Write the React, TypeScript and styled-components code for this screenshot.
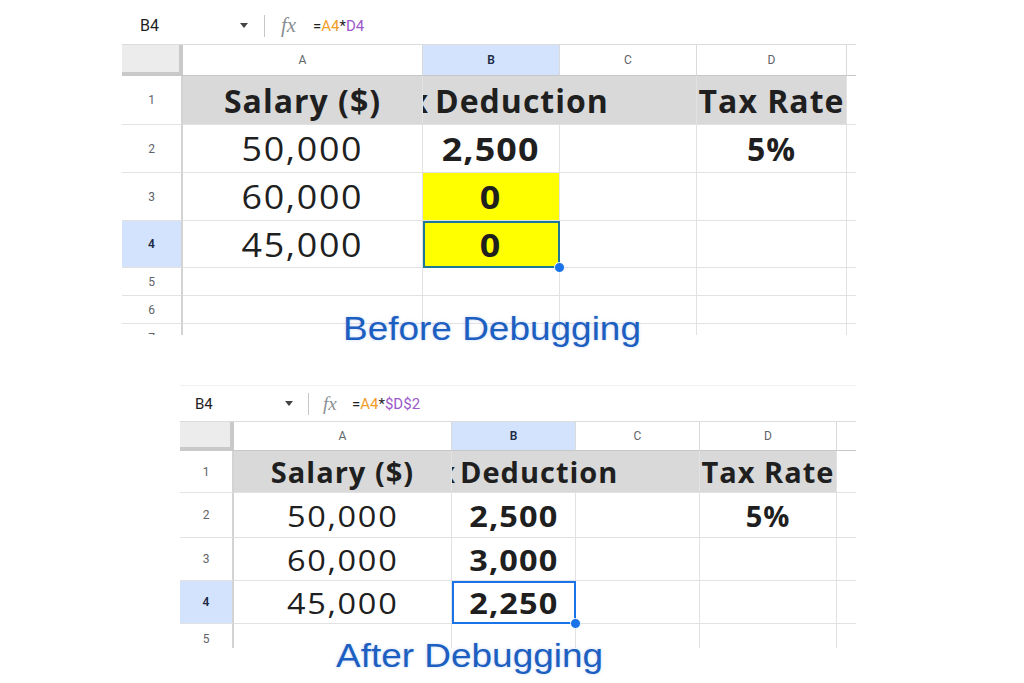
import React from 'react';
import styled, { createGlobalStyle, css } from 'styled-components';

const YELLOW = '#ffff00';
const HEAD_GRAY = '#d9d9d9';
const GRID = '#e2e2e2';
const CELL_FONT = "'Open Sans', 'Noto Sans', sans-serif";
const UI_FONT = "Roboto, 'Liberation Sans', Arial, sans-serif";

type CellVal = { t?: string; bold?: boolean; bg?: string; sel?: boolean; num?: boolean };

type SheetConfig = {
  left: number;
  width: number;
  top: number;
  barH: number;
  barPad: number;
  barLine?: boolean;
  nameW: number;
  nameIndent: number;
  nameFs: number;
  arrowGap: number;
  fxGap: number;
  fxW: number;
  fxFs: number;
  formGap: number;
  formFs: number;
  cols: number[];
  rows: number[];
  gridH: number;
  fs: number;
  lead: number;
  leadGap: number;
  selColor: string;
};

const GlobalStyle = createGlobalStyle`
  html, body { margin: 0; padding: 0; background: #fff; }
  *, *::before, *::after { box-sizing: border-box; }
`;

const Page = styled.main`
  width: 1024px;
  height: 683px;
  overflow: hidden;
  display: flex;
  flex-direction: column;
  align-items: flex-start;
  background: #fff;
`;

const SheetWrap = styled.section<{ $left: number; $width: number; $top: number }>`
  margin: ${p => p.$top}px 0 0 ${p => p.$left}px;
  width: ${p => p.$width}px;
  display: flex;
  flex-direction: column;
`;

const FormulaBar = styled.div<{ $h: number; $pad: number; $line?: boolean }>`
  height: ${p => p.$h}px;
  display: flex;
  align-items: center;
  padding-top: ${p => p.$pad}px;
  border-top: 1px solid ${p => (p.$line ? '#f1f1f1' : 'transparent')};
  font-family: ${UI_FONT};
  color: #1f1f1f;
`;

const NameBox = styled.div<{ $w: number; $indent: number; $fs: number }>`
  width: ${p => p.$w}px;
  padding-left: ${p => p.$indent}px;
  font-size: ${p => p.$fs}px;
`;

const Arrow = styled.span<{ $gap: number }>`
  width: 0;
  height: 0;
  border-left: 4px solid transparent;
  border-right: 4px solid transparent;
  border-top: 5px solid #444;
  margin-right: ${p => p.$gap}px;
`;

const Divider = styled.span`
  width: 1px;
  height: 22px;
  background: #c7c7c7;
`;

const Fx = styled.span<{ $gap: number; $w: number; $fs: number }>`
  margin-left: ${p => p.$gap}px;
  width: ${p => p.$w}px;
  font-family: 'Liberation Serif', serif;
  font-style: italic;
  font-size: ${p => p.$fs}px;
  color: #8a8f94;
`;

const Formula = styled.span<{ $gap: number; $fs: number }>`
  margin-left: ${p => p.$gap}px;
  font-size: ${p => p.$fs}px;
  color: #1f1f1f;
`;

const Ref = styled.span<{ $c: string }>`
  color: ${p => p.$c};
`;

const Grid = styled.div<{ $cols: number[]; $rows: number[]; $h: number }>`
  display: grid;
  grid-template-columns: ${p => p.$cols.map(c => `${c}px`).join(' ')};
  grid-template-rows: ${p => p.$rows.map(r => `${r}px`).join(' ')};
  height: ${p => p.$h}px;
  overflow: hidden;
  border-top: 1px solid #dcdcdc;
`;

const Corner = styled.div`
  background: #ececec;
  border-right: 4px solid #c9c9c9;
  border-bottom: 4px solid #c9c9c9;
`;

const ColHead = styled.div<{ $active?: boolean; $last?: boolean }>`
  display: flex;
  align-items: center;
  justify-content: center;
  font-family: ${UI_FONT};
  font-size: 12px;
  color: ${p => (p.$active ? '#1c2b45' : '#5f6368')};
  font-weight: ${p => (p.$active ? 600 : 400)};
  background: ${p => (p.$active ? '#d3e3fd' : '#fff')};
  border-right: ${p => (p.$last ? 'none' : '1px solid #dadada')};
  border-bottom: 1px solid #c7c7c7;
`;

const RowHead = styled.div<{ $active?: boolean }>`
  display: flex;
  align-items: center;
  justify-content: center;
  font-family: ${UI_FONT};
  font-size: 12px;
  color: ${p => (p.$active ? '#1c2b45' : '#5f6368')};
  font-weight: ${p => (p.$active ? 600 : 400)};
  background: ${p => (p.$active ? '#d3e3fd' : '#fff')};
  border-right: 2px solid #d3d3d3;
  border-bottom: 1px solid ${GRID};
`;

const Cell = styled.div<{ $fs: number; $bold?: boolean; $bg?: string; $sel?: string; $last?: boolean; $span?: number; $start?: boolean }>`
  position: relative;
  display: flex;
  align-items: center;
  justify-content: ${p => (p.$start ? 'flex-start' : 'center')};
  grid-column: span ${p => p.$span ?? 1};
  min-width: 0;
  overflow: hidden;
  white-space: nowrap;
  background: ${p => p.$bg ?? '#fff'};
  border-right: ${p => (p.$last ? 'none' : `1px solid ${GRID}`)};
  border-bottom: 1px solid ${GRID};
  font-family: ${CELL_FONT};
  font-size: ${p => p.$fs}px;
  font-weight: ${p => (p.$bold ? 700 : 400)};
  letter-spacing: ${p => (p.$bold ? 1 : 1.5)}px;
  color: #1f1f1f;
  ${p =>
    p.$sel &&
    css`
      overflow: visible;
      z-index: 1;
      outline: 2px solid ${p.$sel};
      outline-offset: -2px;
      &::after {
        content: '';
        position: absolute;
        right: -6px;
        bottom: -6px;
        width: 11px;
        height: 11px;
        border-radius: 50%;
        background: #1a73e8;
        border: 1px solid #fff;
      }
    `}
`;

// the digits in the reference are drawn wider than the letters
const Num = styled.span`
  display: inline-block;
  transform: scaleX(1.12);
`;

// "Tax " runs off to the left and is clipped by the B1 cell edge
const Lead = styled.span<{ $w: number; $gap: number }>`
  flex: 0 0 ${p => p.$w}px;
  min-width: 0;
  display: flex;
  justify-content: flex-end;
  padding-right: ${p => p.$gap}px;
`;

const Caption = styled.div<{ $x: number; $pull: number }>`
  position: relative;
  z-index: 2;
  margin: ${p => -p.$pull}px 0 0 ${p => p.$x}px;
  font-family: 'Liberation Sans', Arial, sans-serif;
  font-size: 33px;
  line-height: 38px;
  color: #1d5fc0;
  text-shadow: 0 0 3px rgba(90, 140, 230, 0.35);
  white-space: nowrap;
  transform: scaleX(1.12);
  transform-origin: left center;
`;

const topCfg: SheetConfig = {
  left: 122, width: 734, top: 0,
  barH: 44, barPad: 6,
  nameW: 118, nameIndent: 18, nameFs: 16,
  arrowGap: 16, fxGap: 16, fxW: 22, fxFs: 21, formGap: 10, formFs: 15,
  cols: [61, 240, 137, 137, 150, 9],
  rows: [31, 49, 48, 48, 47, 28, 28, 28],
  gridH: 291,
  fs: 32, lead: 12, leadGap: 6, selColor: '#1d7894',
};

const bottomCfg: SheetConfig = {
  left: 180, width: 676, top: 37,
  barH: 36, barPad: 0, barLine: true,
  nameW: 105, nameIndent: 15, nameFs: 15,
  arrowGap: 15, fxGap: 14, fxW: 20, fxFs: 19, formGap: 9, formFs: 15,
  cols: [54, 218, 124, 124, 137, 19],
  rows: [29, 42, 45, 43, 43, 30],
  gridH: 227,
  fs: 29, lead: 8, leadGap: 4, selColor: '#1a73e8',
};

const topRows: CellVal[][] = [
  [{ t: '50,000', num: true }, { t: '2,500', bold: true, num: true }, {}, { t: '5%', bold: true }],
  [{ t: '60,000', num: true }, { t: '0', bold: true, bg: YELLOW, num: true }, {}, {}],
  [{ t: '45,000', num: true }, { t: '0', bold: true, bg: YELLOW, sel: true, num: true }, {}, {}],
  [{}, {}, {}, {}],
  [{}, {}, {}, {}],
  [{}, {}, {}, {}],
];

const bottomRows: CellVal[][] = [
  [{ t: '50,000', num: true }, { t: '2,500', bold: true, num: true }, {}, { t: '5%', bold: true }],
  [{ t: '60,000', num: true }, { t: '3,000', bold: true, num: true }, {}, {}],
  [{ t: '45,000', num: true }, { t: '2,250', bold: true, sel: true, num: true }, {}, {}],
  [{}, {}, {}, {}],
];

function Sheet({ cfg, rows, formula }: { cfg: SheetConfig; rows: CellVal[][]; formula: React.ReactNode }) {
  const letters = ['A', 'B', 'C', 'D'];
  return (
    <SheetWrap $left={cfg.left} $width={cfg.width} $top={cfg.top}>
      <FormulaBar $h={cfg.barH} $pad={cfg.barPad} $line={cfg.barLine}>
        <NameBox $w={cfg.nameW} $indent={cfg.nameIndent} $fs={cfg.nameFs}>B4</NameBox>
        <Arrow $gap={cfg.arrowGap} />
        <Divider />
        <Fx $gap={cfg.fxGap} $w={cfg.fxW} $fs={cfg.fxFs}>fx</Fx>
        <Formula $gap={cfg.formGap} $fs={cfg.formFs}>{formula}</Formula>
      </FormulaBar>
      <Grid $cols={cfg.cols} $rows={cfg.rows} $h={cfg.gridH}>
        <Corner />
        {letters.map(l => (
          <ColHead key={l} $active={l === 'B'}>{l}</ColHead>
        ))}
        <ColHead $last />

        <RowHead>1</RowHead>
        <Cell $fs={cfg.fs} $bold $bg={HEAD_GRAY}>Salary ($)</Cell>
        <Cell $fs={cfg.fs} $bold $bg={HEAD_GRAY} $span={2} $start>
          <Lead $w={cfg.lead} $gap={cfg.leadGap}>Tax</Lead>
          Deduction
        </Cell>
        <Cell $fs={cfg.fs} $bold $bg={HEAD_GRAY}>Tax Rate</Cell>
        <Cell $fs={cfg.fs} $last />

        {rows.map((row, i) => (
          <React.Fragment key={i}>
            <RowHead $active={i === 2}>{i + 2}</RowHead>
            {row.map((c, j) => (
              <Cell
                key={j}
                $fs={cfg.fs}
                $bold={c.bold}
                $bg={c.bg}
                $sel={c.sel ? cfg.selColor : undefined}
              >
                {c.num ? <Num>{c.t}</Num> : c.t}
              </Cell>
            ))}
            <Cell $fs={cfg.fs} $last />
          </React.Fragment>
        ))}
      </Grid>
    </SheetWrap>
  );
}

export default function App() {
  return (
    <Page>
      <GlobalStyle />
      <Sheet
        cfg={topCfg}
        rows={topRows}
        formula={
          <>
            =<Ref $c="#f09d2a">A4</Ref>*<Ref $c="#9b59c9">D4</Ref>
          </>
        }
      />
      <Caption $x={343} $pull={25}>Before Debugging</Caption>
      <Sheet
        cfg={bottomCfg}
        rows={bottomRows}
        formula={
          <>
            =<Ref $c="#f09d2a">A4</Ref>*<Ref $c="#9b59c9">$D$2</Ref>
          </>
        }
      />
      <Caption $x={336} $pull={11}>After Debugging</Caption>
    </Page>
  );
}
